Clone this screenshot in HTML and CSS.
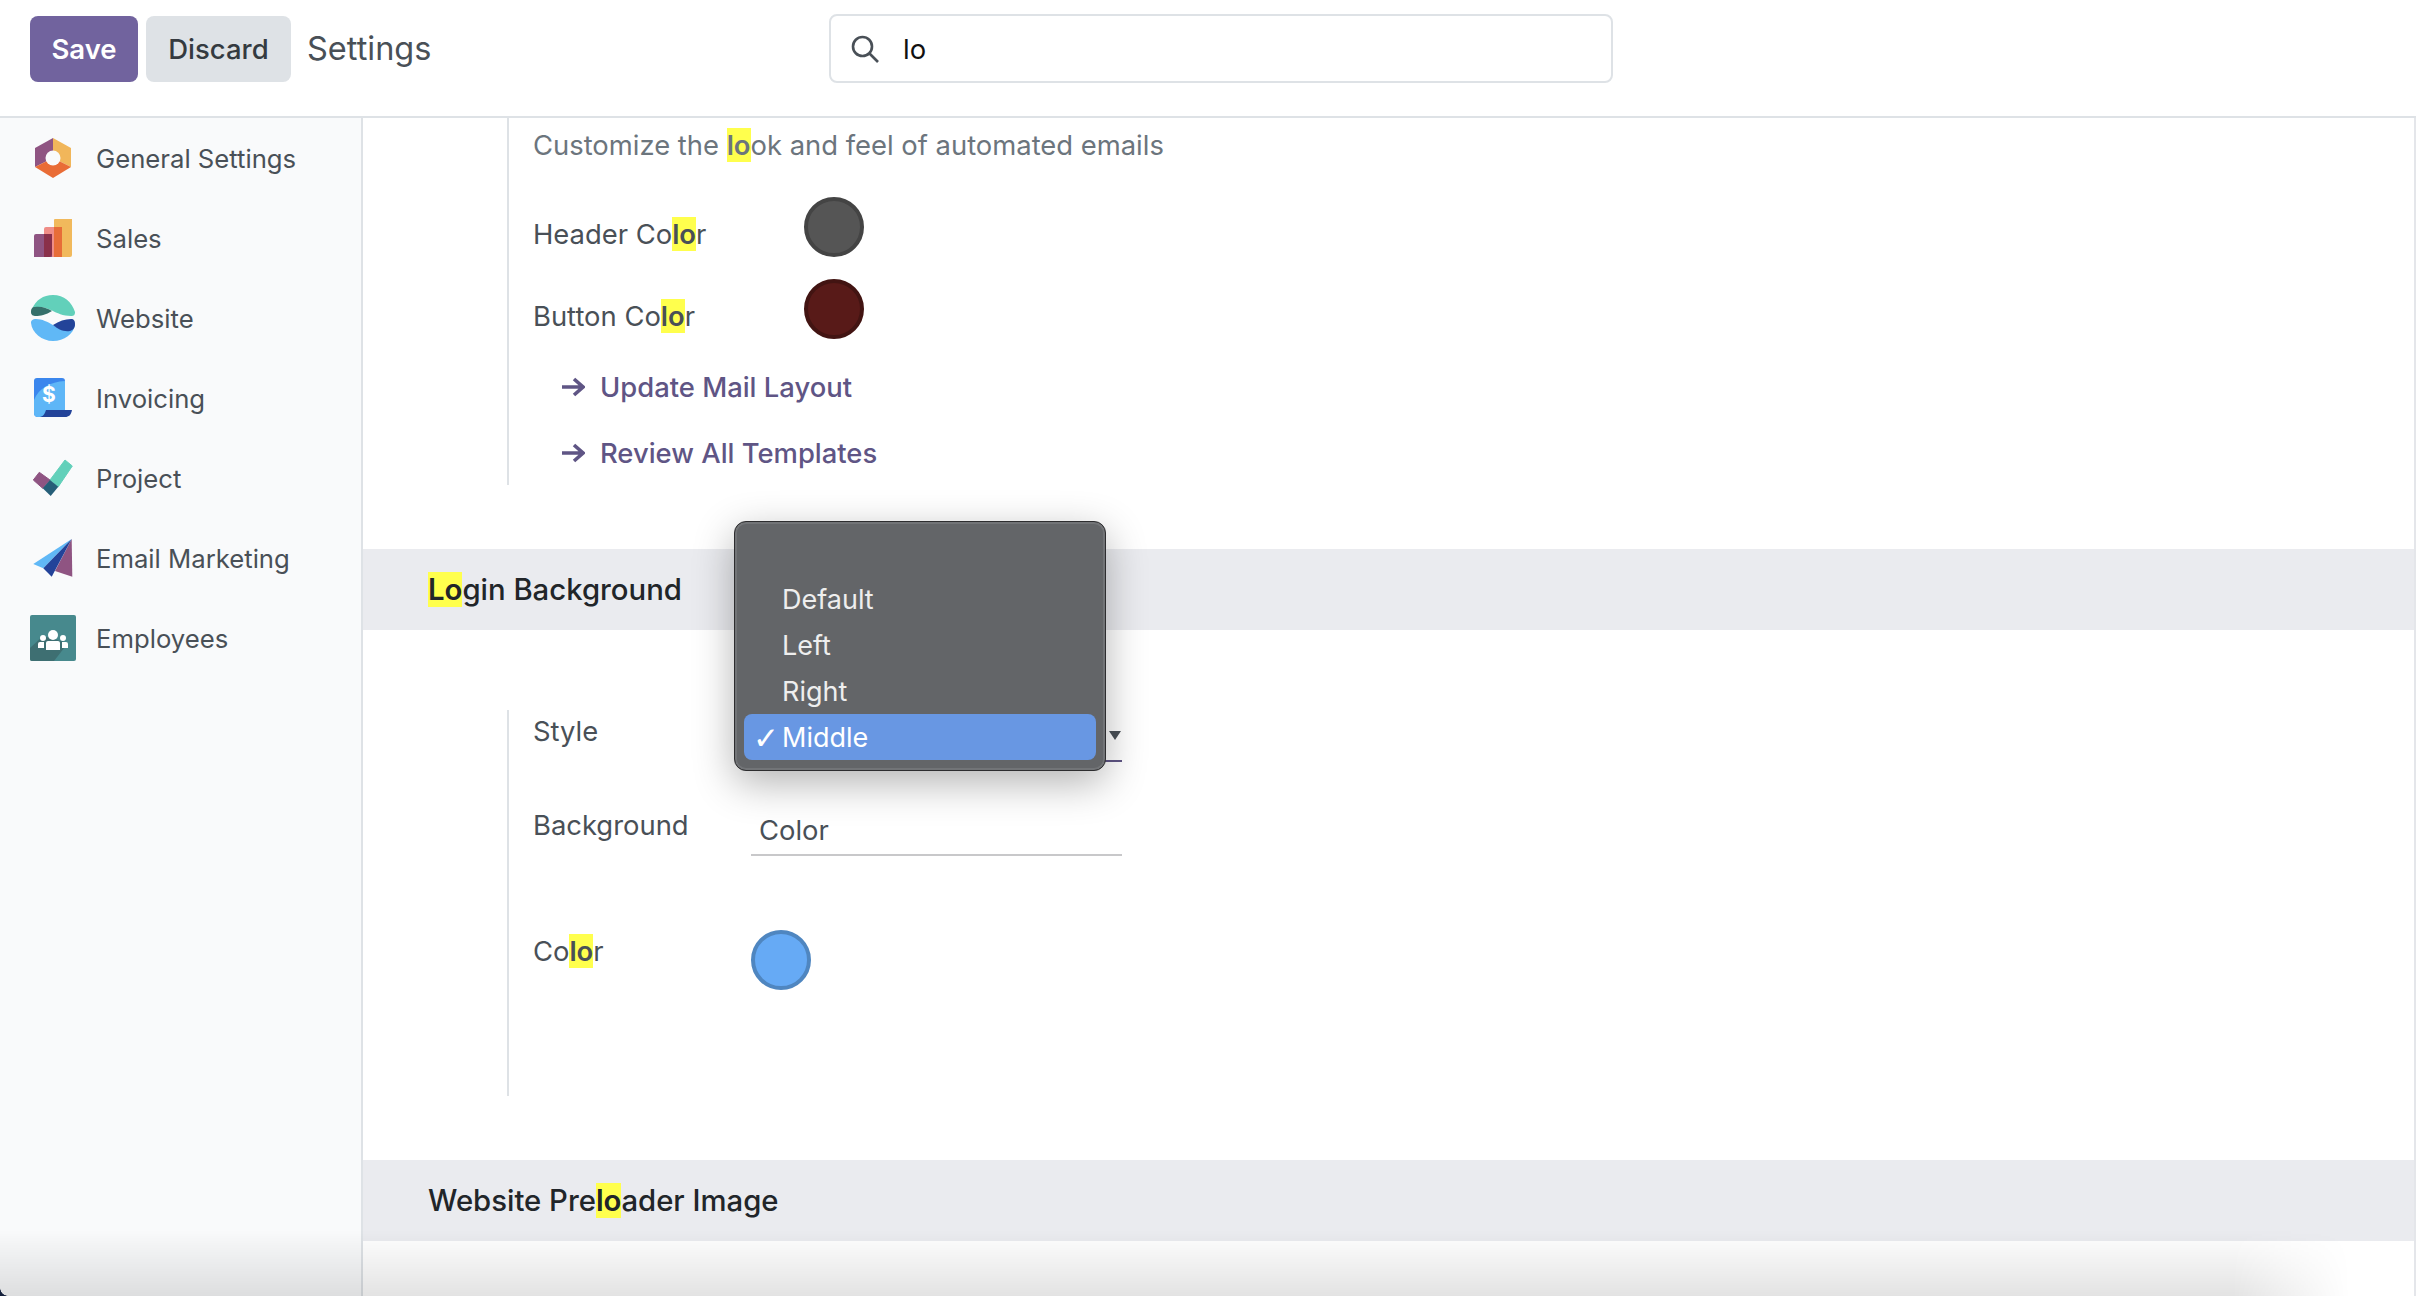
FILE: index.html
```html
<!DOCTYPE HTML>
<html>

<head>
    <meta charset="utf-8">
    <title>Settings</title>
    <link rel="stylesheet" href="styles.css">
</head>

<body>
    <div class="page">
        <header class="topbar">
            <div class="actions">
                <button class="btn btn-save">Save</button>
                <button class="btn btn-discard">Discard</button>
                <span class="page-title">Settings</span>
            </div>
            <div class="search">
                <svg class="search-icon" viewBox="0 0 28 28" width="28" height="28">
                    <circle cx="11.5" cy="11.5" r="9.5" fill="none" stroke="#495057" stroke-width="2.6" />
                    <path d="M18.5 18.5L27 27" fill="none" stroke="#495057" stroke-width="2.6" />
                </svg>
                <span class="search-text">lo</span>
            </div>
        </header>

        <div class="main">
            <nav class="sidebar">
                <a class="nav-item">
                    <svg class="nav-icon" viewBox="0 0 46 46" width="46" height="46">
                        <path d="M23 3L5 13V32L23 23Z" fill="#8f5482" />
                        <path d="M23 3L41 13V32L23 23Z" fill="#f1b65a" />
                        <path d="M5 32L23 43L41 32L23 23Z" fill="#e96c36" />
                        <circle cx="23" cy="23" r="7.5" fill="#f9fafb" />
                    </svg>
                    <span>General Settings</span>
                </a>
                <a class="nav-item">
                    <svg class="nav-icon" viewBox="0 0 46 46" width="46" height="46">
                        <path d="M24 5a1 1 0 0 1 1-1H42V40a2 2 0 0 1-2 2H24Z" fill="#f1b95c" />
                        <path d="M14 14a2 2 0 0 1 2-2H32V42H14Z" fill="#ef8d87" />
                        <path d="M24 12H32V42H24Z" fill="#e76d38" />
                        <path d="M4 21a2 2 0 0 1 2-2H22V42H4Z" fill="#8f5482" />
                        <path d="M14 19H22V39a3 3 0 0 1-3 3H14Z" fill="#8a304a" />
                    </svg>
                    <span>Sales</span>
                </a>
                <a class="nav-item">
                    <svg class="nav-icon" viewBox="0 0 46 46" width="46" height="46">
                        <path d="M2 14C6 5 13 0 23 0C34 0 42 7 45 17C45 20 44 21 41 21C33 21 27 18 22 15.500C15 12 8 11 2 14Z" fill="#62d0ba" />
                        <path d="M1 17C1 14 2 12 5 12C11 11 17 13 22 16C16 20 10 21 6 21C3 21 1 20 1 17Z" fill="#35706b" />
                        <path d="M1 28C1 25 3 24 6 24C12 24 18 27 23 30C28 33 36 37 45 29C44 39 34 46 23 46C12 46 2 38 1 28Z" fill="#60b8f6" />
                        <path d="M23 30C29 26 35 24 41 24C44 24 45 26 45 29C45 33 43 35 40 36C33 37 28 34 23 30Z" fill="#234399" />
                    </svg>
                    <span>Website</span>
                </a>
                <a class="nav-item">
                    <svg class="nav-icon" viewBox="0 0 46 46" width="46" height="46">
                        <path d="M4 6a3 3 0 0 1 3-3H32a3 3 0 0 1 3 3V35H14V42H8a4 4 0 0 1-4-4Z" fill="#3b86ed" />
                        <path d="M4 38V25C9 13 20 7 35 6V36H20L14 42H8a4 4 0 0 1-4-4Z" fill="#5eb6f7" />
                        <path d="M16 35H42C41 40 39 42 35 42H10C14 41 15 38 16 35Z" fill="#234399" />
                        <text class="dollar" x="19" y="27">$</text>
                    </svg>
                    <span>Invoicing</span>
                </a>
                <a class="nav-item">
                    <svg class="nav-icon" viewBox="0 0 46 46" width="46" height="46">
                        <path d="M3.300 25L9.300 17.300L20 25L12.700 33.300Z" fill="#8f5482" stroke="#8f5482" stroke-linejoin="round" />
                        <path d="M20 25L35 5L42.300 11L28.300 31.700Z" fill="#62d0ba" stroke="#62d0ba" stroke-linejoin="round" />
                        <path d="M12.700 33.300L20 25L28.300 31.700L20.700 41Z" fill="#265e78" />
                    </svg>
                    <span>Project</span>
                </a>
                <a class="nav-item">
                    <svg class="nav-icon" viewBox="0 0 46 46" width="46" height="46">
                        <path d="M41.700 4L25 36L42.300 41.700Z" fill="#8f5482" />
                        <path d="M41.700 4L3.300 29L13.300 33.300Z" fill="#60b8f6" />
                        <path d="M41.700 4L13.300 33.300L21.700 41.700Z" fill="#234399" />
                    </svg>
                    <span>Email Marketing</span>
                </a>
                <a class="nav-item">
                    <svg class="nav-icon" viewBox="0 0 46 46" width="46" height="46">
                        <rect width="46" height="46" rx="2" fill="#47898d" />
                        <path d="M0 33L13 21L38 28L24 46H2a2 2 0 0 1-2-2Z" fill="#3e6f72" />
                        <circle cx="23" cy="20" r="5" fill="#fff" />
                        <circle cx="13" cy="23" r="3" fill="#fff" />
                        <circle cx="33" cy="23" r="3" fill="#fff" />
                        <path d="M8 33V29a2 2 0 0 1 2-2H14V33Z" fill="#fff" />
                        <path d="M38 33V29a2 2 0 0 0-2-2H32V33Z" fill="#fff" />
                        <path d="M16 35V28a2 2 0 0 1 2-2H28a2 2 0 0 1 2 2V35Z" fill="#fff" />
                    </svg>
                    <span>Employees</span>
                </a>
            </nav>

            <section class="content">
                <div class="group group-mail">
                    <p class="hint">Customize the <mark>lo</mark>ok and feel of automated emails</p>
                    <div class="color-row color-row-first">
                        <label class="field-label">Header Co<mark>lo</mark>r</label>
                        <span class="swatch swatch-grey"></span>
                    </div>
                    <div class="color-row">
                        <label class="field-label">Button Co<mark>lo</mark>r</label>
                        <span class="swatch swatch-red"></span>
                    </div>
                    <a class="link link-first">
                        <svg class="arrow" viewBox="0 0 24 20" width="24" height="20">
                            <path d="M1 10H21M13 2L22 10L13 18" fill="none" stroke="#5f5585" stroke-width="3.6" />
                        </svg>
                        <span>Update Mail Layout</span>
                    </a>
                    <a class="link">
                        <svg class="arrow" viewBox="0 0 24 20" width="24" height="20">
                            <path d="M1 10H21M13 2L22 10L13 18" fill="none" stroke="#5f5585" stroke-width="3.6" />
                        </svg>
                        <span>Review All Templates</span>
                    </a>
                </div>

                <h2 class="section-head section-login"><span><mark>Lo</mark>gin Background</span></h2>

                <div class="group group-login">
                    <div class="form-row">
                        <label class="field-label">Style</label>
                        <div class="select-field active">
                            <span class="caret"></span>
                        </div>
                    </div>
                    <div class="form-row form-row-bg">
                        <label class="field-label">Background</label>
                        <div class="select-field">
                            <span>Color</span>
                        </div>
                    </div>
                    <div class="form-row form-row-color">
                        <label class="field-label">Co<mark>lo</mark>r</label>
                        <span class="swatch swatch-blue"></span>
                    </div>
                </div>

                <h2 class="section-head section-preload"><span>Website Pre<mark>lo</mark>ader Image</span></h2>
            </section>
        </div>

        <ul class="popup">
            <li>Default</li>
            <li>Left</li>
            <li>Right</li>
            <li class="ac"><span class="check">&#10003;</span>Middle</li>
        </ul>

        <div class="bottom-shade"></div>
        <div class="corner"></div>
    </div>
</body>

</html>
```

FILE: styles.css
```css
* {
    margin: 0;
    padding: 0;
    box-sizing: border-box;
}

body {
    font-family: Inter, "Liberation Sans", sans-serif;
    font-size: 27.4px;
    line-height: 32px;
    color: #495057;
    background: #fff;
}

li {
    list-style: none;
}

mark {
    background: #ffff4d;
    color: inherit;
    font-weight: 600;
}

.page {
    width: 2416px;
    height: 1296px;
    position: relative;
    overflow: hidden;
}

/* top bar */
.topbar {
    height: 118px;
    border-bottom: 2px solid #dee2e6;
    display: grid;
    grid-template-columns: 829px 784px;
    align-items: start;
}

.actions {
    display: flex;
    align-items: center;
    padding: 16px 0 0 30px;
}

.btn {
    height: 66px;
    border: 0;
    border-radius: 8px;
    font-family: inherit;
    font-size: 27.5px;
    font-weight: 600;
}

.btn-save {
    width: 108px;
    background: #71639e;
    color: #fff;
}

.btn-discard {
    width: 145px;
    margin-left: 8px;
    background: #dee2e6;
    color: #343a40;
    font-weight: 500;
}

.page-title {
    margin-left: 16px;
    font-size: 32.5px;
}

.search {
    height: 69px;
    margin-top: 14px;
    border: 2px solid #dee2e6;
    border-radius: 8px;
    display: flex;
    align-items: center;
    padding-left: 20px;
}

.search-text {
    margin-left: 24px;
    color: #111;
}

/* sidebar */
.main {
    display: flex;
    height: 1178px;
}

.sidebar {
    width: 363px;
    flex: none;
    background: #f9fafb;
    border-right: 2px solid #dee2e6;
    font-size: 25.7px;
}

.nav-item {
    height: 80px;
    display: flex;
    align-items: center;
    padding-left: 30px;
}

.nav-item span {
    padding-top: 2px;
}

.nav-icon {
    margin-right: 20px;
}

.dollar {
    font-size: 21px;
    font-weight: 700;
    fill: #fff;
    text-anchor: middle;
}

/* settings */
.content {
    flex: 1;
    border-right: 2px solid #e4e6ea;
    overflow: hidden;
}

.group {
    margin-left: 144px;
    border-left: 2px solid #dee2e6;
    padding-left: 24px;
}

.group-mail {
    height: 367px;
    padding-top: 11px;
}

.hint {
    color: #6c757d;
}

.color-row {
    display: grid;
    grid-template-columns: 271px 60px;
    margin-top: 22px;
}

.color-row-first {
    margin-top: 36px;
}

.color-row .field-label {
    margin-top: 21px;
}

.swatch {
    width: 60px;
    height: 60px;
    border-radius: 50%;
    border-width: 4px;
    border-style: solid;
}

.swatch-grey {
    background: #555;
    border-color: #444;
}

.swatch-red {
    background: #581a18;
    border-color: #421412;
}

.swatch-blue {
    background: #66aaf5;
    border-color: #4f86c0;
}

.link {
    display: flex;
    align-items: center;
    margin: 34px 0 0 28px;
    color: #5f5585;
    font-weight: 500;
}

.link-first {
    margin-top: 32px;
}

.arrow {
    margin-right: 15px;
}

.section-head {
    height: 81px;
    display: flex;
    align-items: center;
    padding-left: 65px;
    background: #eaebef;
    color: #212529;
    font-size: 29.3px;
    font-weight: 500;
}

.section-login {
    margin-top: 64px;
}

.section-preload {
    margin-top: 64px;
}

.group-login {
    margin-top: 80px;
    height: 386px;
    padding-top: 5px;
}

.form-row {
    display: grid;
    grid-template-columns: 218px 371px;
}

.form-row-bg {
    margin-top: 47px;
}

.form-row-color {
    margin-top: 74px;
}

.form-row-color .field-label {
    margin-top: 5px;
}

.select-field {
    height: 47px;
    display: flex;
    justify-content: flex-end;
    padding: 5px 1px 0 8px;
    border-bottom: 2px solid #c8c8ca;
}

.form-row-bg .select-field {
    justify-content: flex-start;
}

.select-field.active {
    border-bottom-color: #5f5585;
}

.caret {
    width: 0;
    height: 0;
    margin-top: 11px;
    border-left: 6px solid transparent;
    border-right: 6px solid transparent;
    border-top: 9px solid #495057;
}

/* open dropdown */
.popup {
    position: absolute;
    left: 734px;
    top: 521px;
    width: 372px;
    height: 250px;
    padding: 54px 9px 10px;
    background: #636568;
    border: 1px solid #2d2d2f;
    border-radius: 12px;
    box-shadow: inset 0 0 0 2px rgba(255, 255, 255, .1), 0 12px 40px rgba(0, 0, 0, .3);
    color: #eee;
    font-size: 27px;
}

.popup li {
    height: 46px;
    line-height: 48px;
    padding-left: 38px;
    border-radius: 8px;
}

.popup li.ac {
    background: #6897e3;
    color: #fff;
    padding-left: 9px;
    display: flex;
}

.check {
    width: 29px;
    font-family: "DejaVu Sans", sans-serif;
    font-size: 31px;
}

/* window shadow at the bottom edge */
.bottom-shade {
    position: absolute;
    left: 0;
    bottom: 0;
    width: 2350px;
    height: 66px;
    background: linear-gradient(rgba(0, 0, 0, 0), rgba(0, 0, 0, .11));
    -webkit-mask-image: linear-gradient(90deg, #000 95%, transparent);
    mask-image: linear-gradient(90deg, #000 95%, transparent);
}

.corner {
    position: absolute;
    left: 0;
    bottom: 0;
    width: 8px;
    height: 8px;
    background: radial-gradient(circle at 100% 0, transparent 7.5px, #14203c 8px);
}
```
